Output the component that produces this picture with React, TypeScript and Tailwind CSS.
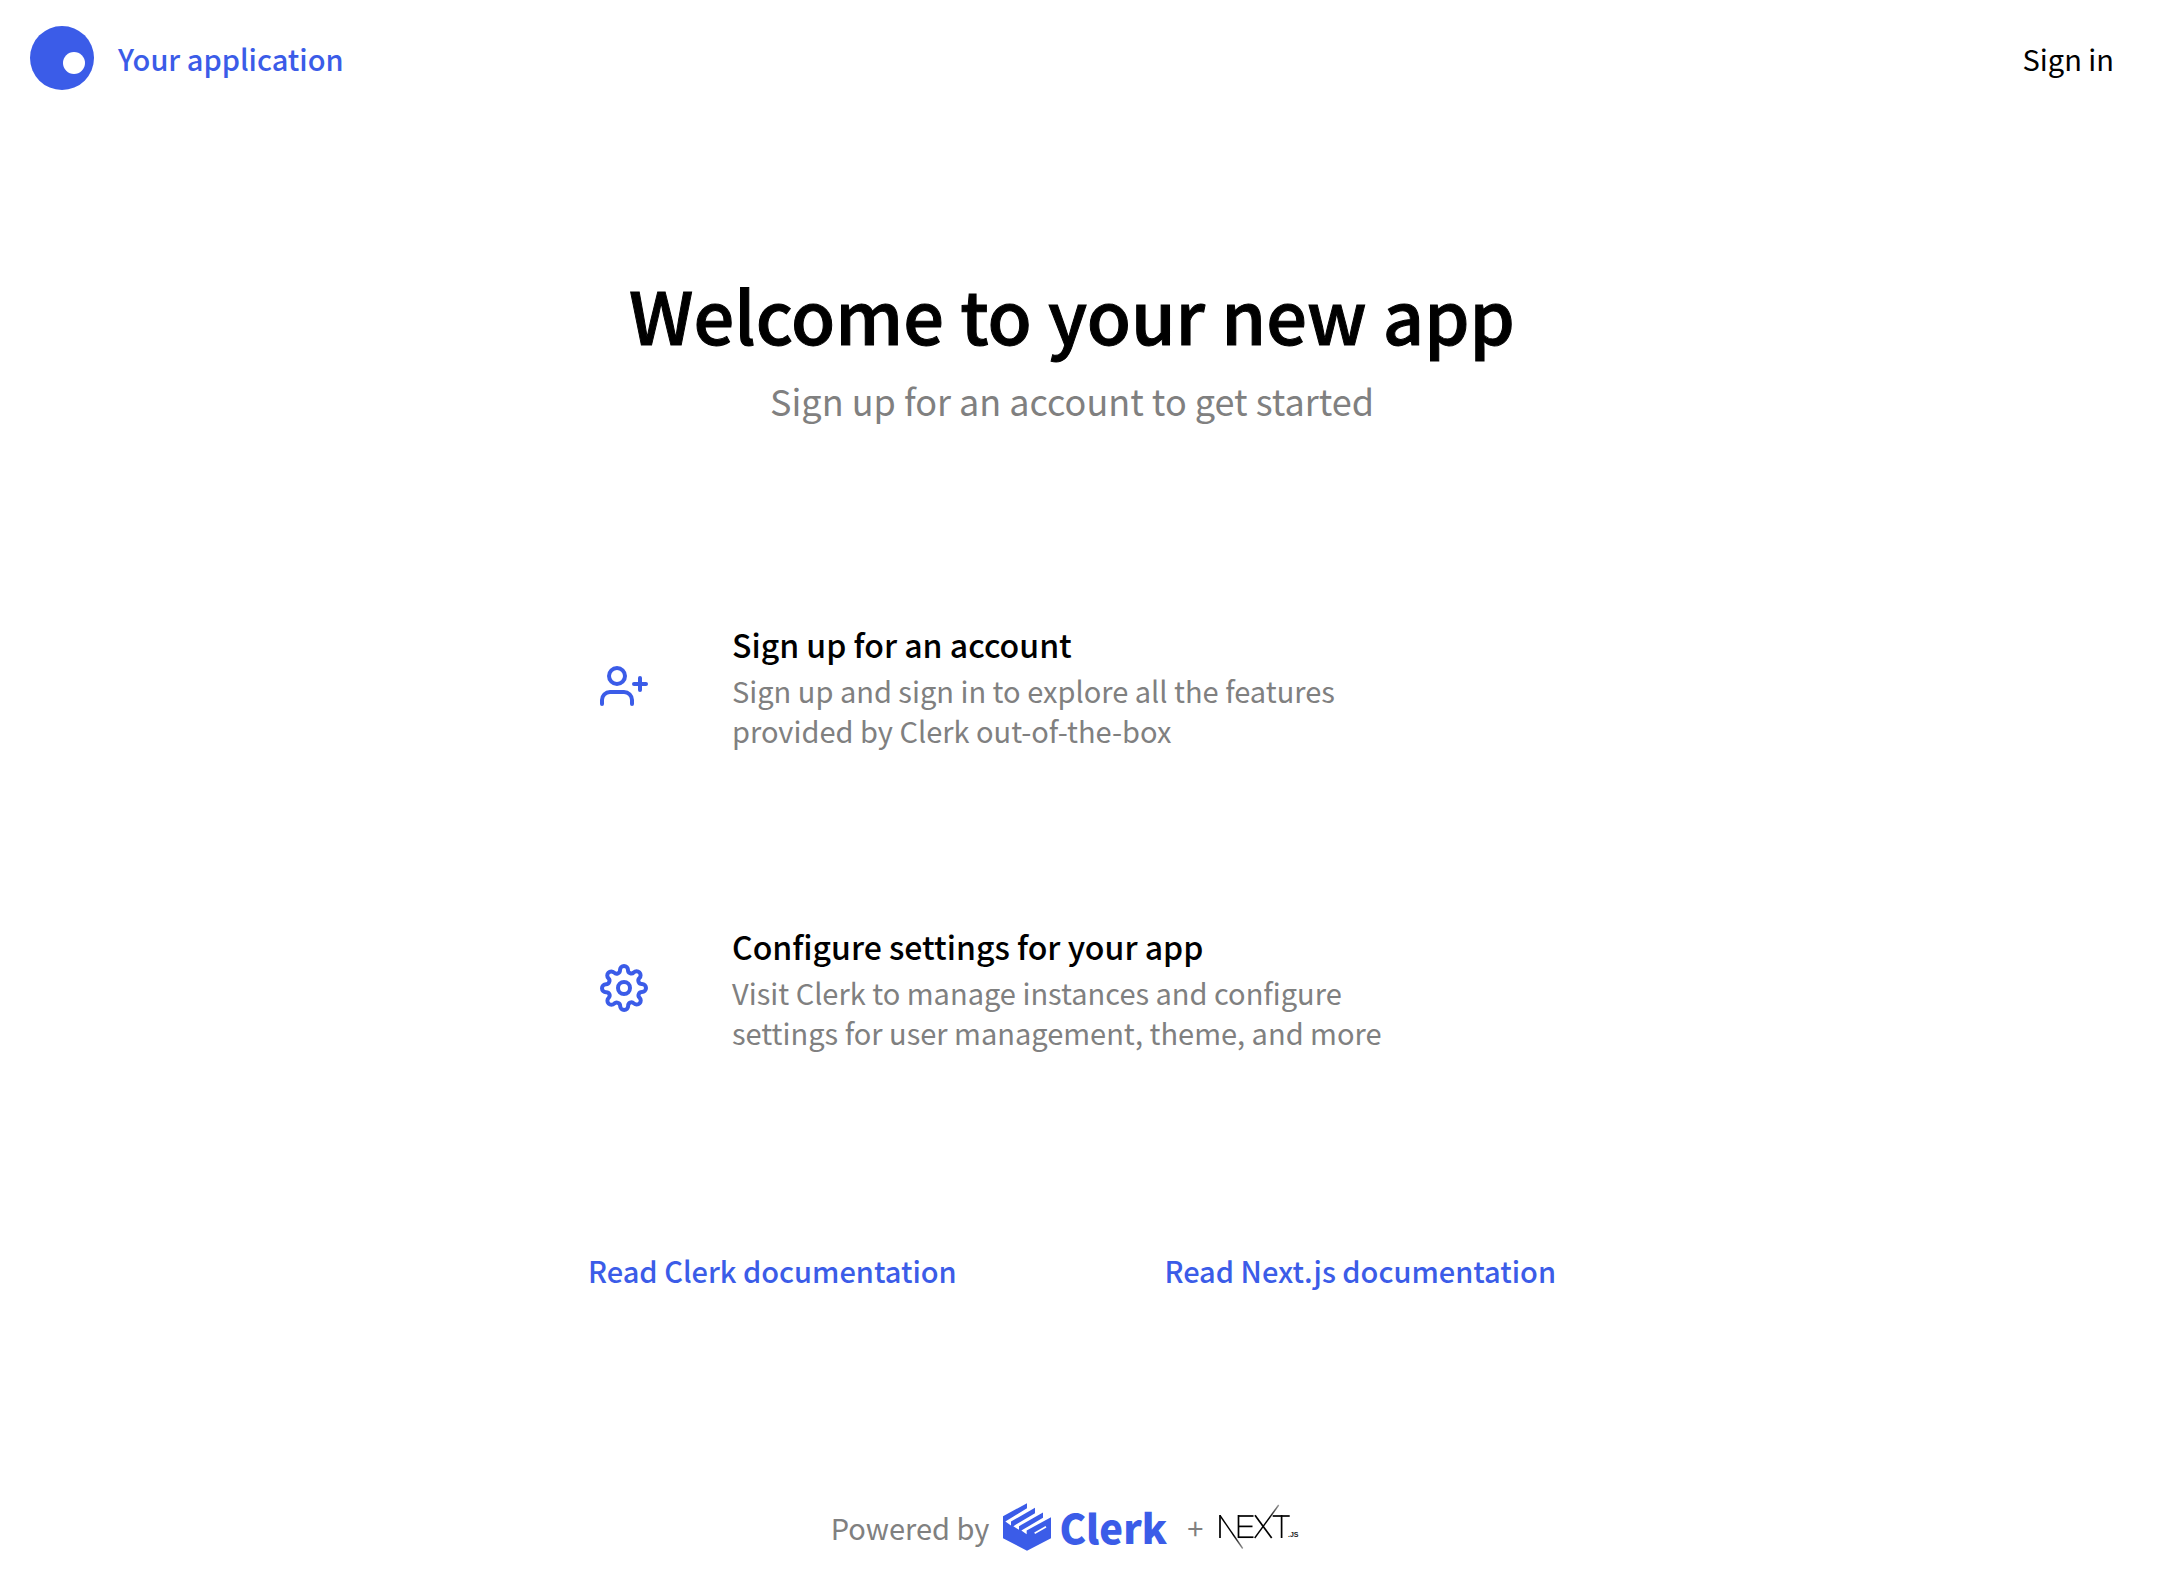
import { FiSettings, FiUserPlus } from "react-icons/fi";
import type { ReactNode } from "react";

function ClerkMark() {
  return (
    <svg viewBox="33 38 144 143" className="h-12 w-12" fill="currentColor" aria-hidden="true">
      <path d="M33 77L105 38V53L40 93L57 105V93L129 52V68L64 107L81 118V107L153 66V82L88 120L104 131V120L177 80V143L105 181L33 143Z" />
      <path d="M128 128L162 109" stroke="#fff" strokeWidth="5" />
    </svg>
  );
}

function NextLogo() {
  return (
    <svg viewBox="0 0 96 48" className="h-12 w-24" role="img" aria-label="Next.js">
      <defs>
        <linearGradient id="fadeDown" gradientUnits="userSpaceOnUse" x1="3" y1="12" x2="26" y2="46">
          <stop offset="0.6" stopColor="#000" />
          <stop offset="1" stopColor="#000" stopOpacity="0.4" />
        </linearGradient>
        <linearGradient id="fadeUp" gradientUnits="userSpaceOnUse" x1="38" y1="35" x2="62" y2="2">
          <stop offset="0.6" stopColor="#000" />
          <stop offset="1" stopColor="#000" stopOpacity="0.4" />
        </linearGradient>
      </defs>
      <g stroke="#000" strokeWidth="1.7" fill="none">
        <line x1="3" y1="12" x2="3" y2="35" />
        <line x1="3" y1="12.5" x2="25.7" y2="45.5" stroke="url(#fadeDown)" strokeWidth="1.4" />
        <line x1="21.5" y1="12" x2="21.5" y2="35" />
        <line x1="21" y1="13" x2="36.5" y2="13" />
        <line x1="21" y1="23.4" x2="35.5" y2="23.4" />
        <line x1="21" y1="34.2" x2="36.5" y2="34.2" />
        <line x1="38" y1="12.3" x2="54.7" y2="35" />
        <line x1="37.7" y1="35" x2="61.7" y2="2" stroke="url(#fadeUp)" strokeWidth="1.4" />
        <line x1="55.7" y1="13" x2="72.7" y2="13" />
        <line x1="64.6" y1="12" x2="64.6" y2="35" />
      </g>
      <text x="71" y="34" fontSize="7" fontWeight="700" fill="#222" className="font-['Liberation_Sans']">.JS</text>
    </svg>
  );
}

function Card({ icon, title, children }: { icon: ReactNode; title: string; children: ReactNode }) {
  return (
    <a href="#" className="flex items-center gap-21 px-9">
      <span className="shrink-0 text-[#3b5ce8]">{icon}</span>
      <div>
        <h2 className="mb-1 text-[32px] leading-11 font-medium">{title}</h2>
        <p className="text-[29px] leading-10 text-[#808080]">{children}</p>
      </div>
    </a>
  );
}

export default function App() {
  return (
    <div className="flex min-h-screen flex-col bg-white pr-4 font-['Noto_Sans_CJK_SC',sans-serif] text-[29px] leading-10 text-black">
      <header className="flex items-center justify-between py-[26px] pr-[30px] pl-[30px]">
        <a href="#" className="flex items-center gap-6 font-medium text-[#3b5ce8]">
          <svg viewBox="0 0 64 64" className="h-16 w-16" aria-hidden="true">
            <circle cx="32" cy="32" r="32" fill="currentColor" />
            <circle cx="44" cy="37" r="11" fill="#fff" />
          </svg>
          Your application
        </a>
        <a href="#">Sign in</a>
      </header>
      <main className="flex flex-col items-center pt-[158px]">
        <h1 className="text-[72px] leading-20 font-medium [-webkit-text-stroke:1px_black]">Welcome to your new app</h1>
        <p className="mt-[22px] text-[36px] leading-12 text-[#808080]">Sign up for an account to get started</p>
        <div className="mt-[198px] flex w-full max-w-[1016px] flex-col gap-[174px]">
          <Card icon={<FiUserPlus size={48} />} title="Sign up for an account">
            Sign up and sign in to explore all the features
            <br />
            provided by Clerk out-of-the-box
          </Card>
          <Card icon={<FiSettings size={48} />} title="Configure settings for your app">
            Visit Clerk to manage instances and configure
            <br />
            settings for user management, theme, and more
          </Card>
        </div>
        <nav className="mt-[198px] flex w-full max-w-[968px] justify-between font-medium text-[#3b5ce8]">
          <a href="#">Read Clerk documentation</a>
          <a href="#">Read Next.js documentation</a>
        </nav>
      </main>
      <footer className="mt-auto flex items-center justify-center pb-[37px] text-[#808080]">
        <span>Powered by</span>
        <a href="#" className="ml-3.5 flex items-center gap-2 text-[#3b5ce8]">
          <ClerkMark />
          <span className="text-[40px] leading-12 font-black">Clerk</span>
        </a>
        <span className="mr-3.5 ml-5">+</span>
        <a href="#"><NextLogo /></a>
      </footer>
    </div>
  );
}
